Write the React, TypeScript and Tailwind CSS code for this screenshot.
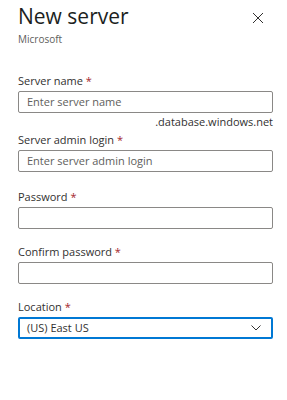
const Label = ({ text }: { text: string }) => (
  <div className="text-[11px] leading-[14px] text-[#323130]">
    {text} <span className="text-[#a4262c]">*</span>
  </div>
);

const Input = ({ placeholder }: { placeholder?: string }) => (
  <div className="h-[22px] border border-[#8a8886] rounded-[2px] bg-white px-[8px] flex items-center text-[11px] text-[#605e5c]">
    {placeholder}
  </div>
);

const App = () => {
  return (
    <div
      className="w-[287px] h-[400px] bg-white pl-[18px] pr-[14px] pt-[2px]"
      style={{ fontFamily: '"Open Sans", "Noto Sans", sans-serif' }}
    >
      {/* header */}
      <div className="flex justify-between items-start">
        <div className="text-[21px] leading-[28px] text-[#201f1e]">New server</div>
        <svg width="12" height="12" viewBox="0 0 12 12" className="mt-[10px] mr-[9px]">
          <path d="M1 1 L11 11 M11 1 L1 11" stroke="#323130" strokeWidth="1" />
        </svg>
      </div>
      <div className="text-[10px] leading-[12px] text-[#605e5c] mt-[3px]">Microsoft</div>

      {/* form */}
      <div className="mt-[29px] w-[255px]">
        <Label text="Server name" />
        <div className="mt-[3px]">
          <Input placeholder="Enter server name" />
        </div>
        <div className="text-right text-[11px] leading-[14px] text-[#323130] mt-[2px]">
          .database.windows.net
        </div>

        <div className="mt-[4px]">
          <Label text="Server admin login" />
        </div>
        <div className="mt-[3px]">
          <Input placeholder="Enter server admin login" />
        </div>

        <div className="mt-[18px]">
          <Label text="Password" />
        </div>
        <div className="mt-[3px]">
          <Input />
        </div>

        <div className="mt-[16px]">
          <Label text="Confirm password" />
        </div>
        <div className="mt-[3px]">
          <Input />
        </div>

        <div className="mt-[16px]">
          <Label text="Location" />
        </div>
        <div className="mt-[3px] h-[22px] border-2 border-[#0078d4] rounded-[2px] flex items-center justify-between pl-[7px] pr-[10px] text-[11px] text-[#323130]">
          <span>(US) East US</span>
          <svg width="10" height="6" viewBox="0 0 10 6">
            <path d="M0.5 0.5 L5 5 L9.5 0.5" fill="none" stroke="#323130" strokeWidth="1" />
          </svg>
        </div>
      </div>
    </div>
  );
};

export default App;
